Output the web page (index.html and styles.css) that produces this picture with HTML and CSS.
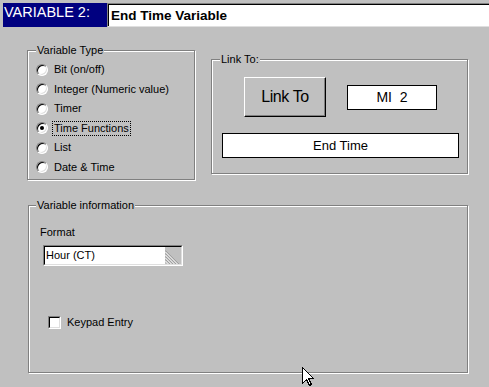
FILE: index.html
```html
<!DOCTYPE html>
<html>
<head>
<meta charset="utf-8">
<link rel="stylesheet" href="styles.css">
</head>
<body>
<div class="header">
  <div class="var-label">VARIABLE 2:</div>
  <div class="var-name">End Time Variable</div>
</div>
<div class="main">
  <div class="top-row">
    <fieldset class="group group-type">
      <legend>Variable Type</legend>
      <div class="radios">
        <div class="radio-row"><span class="radio"></span><span class="rlabel">Bit (on/off)</span></div>
        <div class="radio-row"><span class="radio"></span><span class="rlabel">Integer (Numeric value)</span></div>
        <div class="radio-row"><span class="radio"></span><span class="rlabel">Timer</span></div>
        <div class="radio-row"><span class="radio checked"></span><span class="rlabel focus">Time Functions</span></div>
        <div class="radio-row"><span class="radio"></span><span class="rlabel">List</span></div>
        <div class="radio-row"><span class="radio"></span><span class="rlabel">Date &amp; Time</span></div>
      </div>
    </fieldset>
    <fieldset class="group group-link">
      <legend>Link To:</legend>
      <div class="link-body">
        <div class="link-row">
          <div class="btn">Link To</div>
          <div class="box box-mi">MI  2</div>
        </div>
        <div class="box box-end">End Time</div>
      </div>
    </fieldset>
  </div>
  <fieldset class="group group-info">
    <legend>Variable information</legend>
    <div class="info-body">
      <div class="field-label">Format</div>
      <div class="combo">
        <div class="combo-inner">
          <div class="combo-text">Hour (CT)</div>
          <div class="grip">
            <svg width="16" height="16" viewBox="0 0 16 16">
              <line x1="0" y1="2.5" x2="14" y2="16.5" stroke="#808080" stroke-width="1"/>
              <line x1="0" y1="3.5" x2="13" y2="16.5" stroke="#ffffff" stroke-width="1"/>
              <line x1="0" y1="5.5" x2="11" y2="16.5" stroke="#808080" stroke-width="1"/>
              <line x1="0" y1="6.5" x2="10" y2="16.5" stroke="#ffffff" stroke-width="1"/>
              <line x1="0" y1="8.5" x2="8" y2="16.5" stroke="#808080" stroke-width="1"/>
              <line x1="0" y1="9.5" x2="7" y2="16.5" stroke="#ffffff" stroke-width="1"/>
              <line x1="0" y1="11.5" x2="5" y2="16.5" stroke="#808080" stroke-width="1"/>
              <line x1="0" y1="12.5" x2="4" y2="16.5" stroke="#ffffff" stroke-width="1"/>
            </svg>
          </div>
        </div>
      </div>
      <div class="check-row">
        <span class="check"><span class="check-inner"></span></span>
        <span class="clabel">Keypad Entry</span>
      </div>
    </div>
  </fieldset>
</div>
<svg class="cursor" width="13" height="20" viewBox="0 0 13 20">
  <path d="M0.5 0.5 L0.5 16.5 L4.5 12.5 L7.5 18.5 L9.5 17.5 L6.5 11.5 L11.5 11.5 Z" fill="#fff" stroke="#000" stroke-width="1" shape-rendering="crispEdges"/>
</svg>
</body>
</html>
```
FILE: styles.css
```css
html, body {
  margin: 0;
  padding: 0;
}
body {
  background: #c0c0c0;
  width: 489px;
  height: 387px;
  overflow: hidden;
  position: relative;
  font-family: "Liberation Sans", Arial, sans-serif;
  font-size: 11px;
  color: #000;
}
.header {
  display: flex;
  height: 24px;
  margin: 3px 0 0 3px;
}
.var-label {
  width: 104px;
  background: #000080;
  color: #fff;
  font-size: 14.5px;
  line-height: 16px;
  padding: 1px 0 0 1px;
  box-sizing: border-box;
  white-space: nowrap;
}
.var-name {
  flex: 1;
  background: #fff;
  border-top: 1px solid #808080;
  border-left: 1px solid #808080;
  border-bottom: 1px solid #dfdfdf;
  box-shadow: inset 1px 1px 0 #000;
  display: flex;
  align-items: center;
  padding-left: 3px;
  font-weight: bold;
  font-size: 13.5px;
}
.main {
  padding-left: 27px;
}
.top-row {
  display: flex;
  align-items: flex-start;
  margin-top: 17px;
}
.group {
  margin: 0;
  padding: 0;
  min-width: 0;
  box-sizing: border-box;
  border: 1px solid #808080;
  box-shadow: 1px 1px 0 #fff, inset 1px 1px 0 #fff;
}
.group legend {
  padding: 0 1px;
  margin-left: 8px;
  line-height: 12px;
  font-size: 11px;
  background: #c0c0c0;
}
.group-type {
  width: 168px;
}
.radios {
  padding: 4px 0 2px 8px;
}
.radio-row {
  height: 19.5px;
  display: flex;
  align-items: center;
}
.radio {
  width: 12px;
  height: 12px;
  box-sizing: border-box;
  border-radius: 50%;
  background: #fff;
  border: 1px solid;
  border-color: #808080 #fff #fff #808080;
  box-shadow: inset 1px 1px 0 #000, inset -1px -1px 0 #dfdfdf;
  position: relative;
  flex: none;
}
.radio.checked::after {
  content: "";
  position: absolute;
  left: 3px;
  top: 3px;
  width: 4px;
  height: 4px;
  border-radius: 50%;
  background: #000;
}
.rlabel {
  margin-left: 4px;
  padding: 0 1px;
  border: 1px solid transparent;
  line-height: 13px;
  white-space: nowrap;
}
.rlabel.focus {
  border: 1px dotted #000;
}
.group-link {
  width: 257px;
  margin-left: 16px;
  margin-top: 9px;
}
.link-body {
  padding: 12px 0 15px 0;
}
.link-row {
  display: flex;
  align-items: center;
  padding-left: 32px;
}
.btn {
  width: 82px;
  height: 40px;
  box-sizing: border-box;
  border: 1px solid;
  border-color: #fff #000 #000 #fff;
  box-shadow: inset -1px -1px 0 #808080;
  display: flex;
  align-items: center;
  justify-content: center;
  font-size: 16px;
  letter-spacing: -0.4px;
}
.box {
  background: #fff;
  border: 1px solid #000;
  box-sizing: border-box;
  height: 25px;
  display: flex;
  align-items: center;
  justify-content: center;
  white-space: pre;
}
.box-mi {
  width: 90px;
  margin-left: 21px;
  font-size: 14px;
}
.box-end {
  width: 237px;
  margin: 16px 0 0 10px;
  font-size: 13px;
}
.group-info {
  width: 440px;
  margin: 19px 0 0 1px;
}
.group-info legend {
  margin-left: 7px;
}
.info-body {
  padding: 15px 0 43px 11px;
}
.field-label {
  line-height: 13px;
}
.combo {
  width: 140px;
  height: 21px;
  box-sizing: border-box;
  margin: 6px 0 0 3px;
  border: 1px solid;
  border-color: #808080 #fff #fff #808080;
}
.combo-inner {
  height: 100%;
  box-sizing: border-box;
  border: 1px solid;
  border-color: #000 #dfdfdf #dfdfdf #000;
  display: flex;
  background: #fff;
}
.combo-text {
  flex: 1;
  padding-left: 1px;
  line-height: 17px;
  font-size: 11px;
}
.grip {
  width: 16px;
  background: #c0c0c0;
  display: flex;
  align-items: flex-end;
}
.grip svg {
  display: block;
}
.check-row {
  display: flex;
  align-items: center;
  margin: 50px 0 0 8px;
  height: 13px;
}
.check {
  width: 13px;
  height: 13px;
  box-sizing: border-box;
  border: 1px solid;
  border-color: #808080 #fff #fff #808080;
  flex: none;
}
.check-inner {
  display: block;
  height: 100%;
  box-sizing: border-box;
  border: 1px solid;
  border-color: #000 #dfdfdf #dfdfdf #000;
  background: #fff;
}
.clabel {
  margin-left: 6px;
  line-height: 13px;
}
.cursor {
  position: absolute;
  left: 302px;
  top: 367px;
}
```
